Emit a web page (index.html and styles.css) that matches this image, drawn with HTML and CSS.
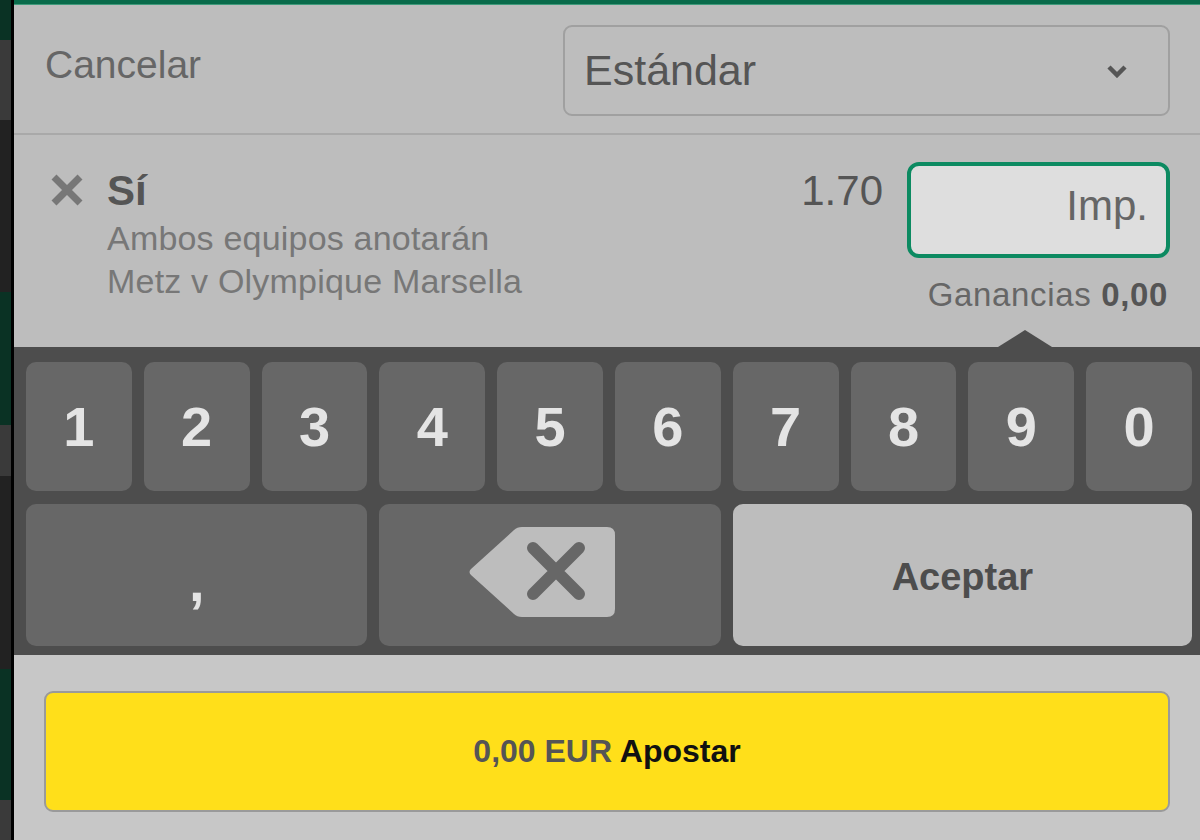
FILE: index.html
```html
<!DOCTYPE html>
<html lang="es">
<head>
<meta charset="utf-8">
<title>Boleto</title>
<link rel="stylesheet" href="styles.css">
</head>
<body>
<div class="screen">
  <div class="side"></div>
  <div class="panel">
    <div class="topline"></div>
    <header class="header">
      <span class="cancel">Cancelar</span>
      <div class="select">
        <span class="select-text">Estándar</span>
        <svg class="chev" viewBox="0 0 22 14" width="22" height="14"><path d="M3 3 L11 11 L19 3" fill="none" stroke="#555" stroke-width="4.5"/></svg>
      </div>
    </header>
    <section class="bet">
      <svg class="remove" viewBox="0 0 34 34" width="34" height="34"><path d="M4 4 L30 30 M30 4 L4 30" fill="none" stroke="#777" stroke-width="7"/></svg>
      <div class="info">
        <div class="sel">Sí</div>
        <div class="market">Ambos equipos anotarán</div>
        <div class="event">Metz v Olympique Marsella</div>
      </div>
      <div class="stake">
        <div class="stake-row">
          <span class="odds">1.70</span>
          <div class="input">Imp.</div>
        </div>
        <div class="win">Ganancias <b>0,00</b></div>
      </div>
    </section>
    <section class="keypad">
      <div class="key">1</div>
      <div class="key">2</div>
      <div class="key">3</div>
      <div class="key">4</div>
      <div class="key">5</div>
      <div class="key">6</div>
      <div class="key">7</div>
      <div class="key">8</div>
      <div class="key">9</div>
      <div class="key">0</div>
      <div class="key span3 comma">,</div>
      <div class="key span3">
        <svg class="backspace" viewBox="0 0 147 90" width="147" height="90">
          <path d="M3 42 L46 3 Q49 0 54 0 H139 Q147 0 147 8 V82 Q147 90 139 90 H54 Q49 90 46 87 L3 48 Q0 45 3 42 Z" fill="#bdbdbd"/>
          <path d="M65 21 L111 67 M111 21 L65 67" fill="none" stroke="#676767" stroke-width="12" stroke-linecap="round"/>
        </svg>
      </div>
      <div class="key span4 accept">Aceptar</div>
    </section>
    <footer class="footer">
      <button class="bet-btn"><span class="amt">0,00 EUR</span> Apostar</button>
    </footer>
  </div>
</div>
</body>
</html>
```

FILE: styles.css
```css
html, body {
  margin: 0;
  padding: 0;
}
body {
  font-family: "Liberation Sans", Arial, sans-serif;
  background: #222;
  overflow: hidden;
}
.screen {
  display: flex;
  width: 1200px;
  height: 840px;
}
.side {
  width: 11px;
  flex: none;
  border-right: 3px solid #000;
  background: linear-gradient(to bottom,
    #0a3224 0 40px,
    #3a3a3a 40px 120px,
    #222 120px 292px,
    #0a3224 292px 425px,
    #3a3a3a 425px 476px,
    #222 476px 669px,
    #0a3224 669px 800px,
    #3a3a3a 800px);
}
.panel {
  flex: 1;
  display: flex;
  flex-direction: column;
  background: #bdbdbd;
}
.topline {
  height: 5px;
  flex: none;
  background: linear-gradient(to bottom, #0a6b4b 0 4px, #3f9a7b 4px);
}
.header {
  height: 130px;
  flex: none;
  box-sizing: border-box;
  border-bottom: 2px solid #a9a9a9;
  display: flex;
  align-items: center;
  padding: 0 30px 0 31px;
}
.cancel {
  font-size: 39px;
  color: #666;
  margin-bottom: 8px;
}
.select {
  margin-left: auto;
  margin-top: 3px;
  width: 607px;
  height: 91px;
  box-sizing: border-box;
  border: 2px solid #a0a0a0;
  border-radius: 9px;
  display: flex;
  align-items: center;
  justify-content: space-between;
  padding: 0 40px 0 19px;
}
.select-text {
  font-size: 43px;
  color: #555;
}
.chev {
  display: block;
}
.bet {
  height: 212px;
  flex: none;
  box-sizing: border-box;
  display: flex;
  align-items: flex-start;
  padding: 27px 30px 0 36px;
}
.remove {
  flex: none;
  margin-top: 11px;
}
.info {
  margin-left: 23px;
}
.sel {
  font-size: 42px;
  font-weight: bold;
  color: #555;
  line-height: 48px;
  margin-top: 5px;
}
.market, .event {
  font-size: 34px;
  color: #777;
  line-height: 43px;
  letter-spacing: 0.2px;
}
.market {
  margin-top: 2px;
}
.stake {
  margin-left: auto;
  display: flex;
  flex-direction: column;
  align-items: flex-end;
}
.stake-row {
  display: flex;
  align-items: flex-start;
  gap: 24px;
}
.odds {
  font-size: 42px;
  line-height: 48px;
  color: #555;
  margin-top: 5px;
}
.input {
  width: 263px;
  height: 96px;
  box-sizing: border-box;
  border: 4px solid #0c8a61;
  border-radius: 12px;
  background: #dedede;
  display: flex;
  align-items: center;
  justify-content: flex-end;
  padding: 0 18px 8px 0;
  font-size: 42px;
  color: #666;
}
.win {
  font-size: 33px;
  line-height: 40px;
  color: #666;
  margin-top: 17px;
  margin-right: 2px;
  letter-spacing: 0.65px;
}
.win b {
  color: #555;
}
.keypad {
  position: relative;
  height: 308px;
  flex: none;
  box-sizing: border-box;
  background: #4d4d4d;
  padding: 15px 8px 0 12px;
  display: grid;
  grid-template-columns: repeat(10, 1fr);
  grid-template-rows: 129px 142px;
  column-gap: 12px;
  row-gap: 13px;
}
.keypad::before {
  content: "";
  position: absolute;
  top: -17px;
  left: 984px;
  border-left: 27px solid transparent;
  border-right: 27px solid transparent;
  border-bottom: 17px solid #4d4d4d;
}
.key {
  background: #676767;
  border-radius: 10px;
  color: #e4e4e4;
  font-weight: bold;
  font-size: 56px;
  display: flex;
  align-items: center;
  justify-content: center;
}
.span3 {
  grid-column: span 3;
}
.span4 {
  grid-column: span 4;
}
.comma {
  padding-top: 12px;
}
.backspace {
  display: block;
  margin-right: 17px;
  margin-bottom: 6px;
}
.accept {
  background: #bdbdbd;
  color: #4d4d4d;
  font-size: 38px;
  padding-top: 4px;
}
.footer {
  flex: 1;
  background: #c7c7c7;
  padding: 36px 30px 0 30px;
}
.bet-btn {
  display: block;
  width: 100%;
  height: 121px;
  box-sizing: border-box;
  border: 2px solid #9a9a9a;
  border-radius: 9px;
  background: #ffdf1a;
  font-family: "Liberation Sans", Arial, sans-serif;
  font-size: 32px;
  font-weight: bold;
  color: #111;
  padding: 0;
}
.amt {
  color: #555;
}
```
